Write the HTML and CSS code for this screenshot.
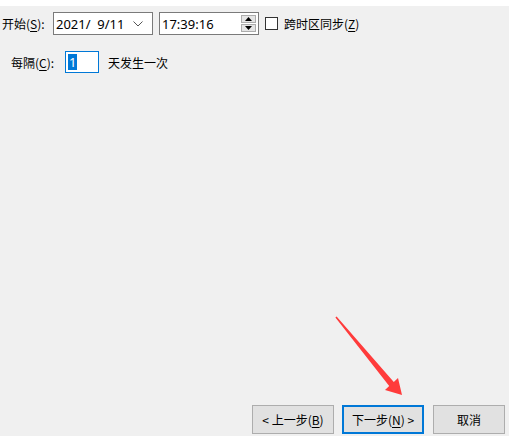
FILE: index.html
```html
<!DOCTYPE html>
<html lang="zh-CN">
<head>
    <meta charset="UTF-8">
    <title>触发器</title>
    <link rel="stylesheet" href="styles.css">
</head>
<body>
    <div class="page">
        <div class="topband"></div>

        <!-- 开始时间 -->
        <div class="row start-row">
            <label class="label">开始(<u>S</u>):</label>
            <div class="field date-field">
                <span class="value">2021/&nbsp; 9/11</span>
                <svg class="caret" width="10" height="6" viewBox="0 0 10 6">
                    <path d="M0.5 0.5 L5 5 L9.5 0.5" fill="none" stroke="#555" stroke-width="1"/>
                </svg>
            </div>
            <div class="field time-field">
                <span class="value">17:39:16</span>
                <div class="spin">
                    <div class="spin-btn"><svg width="7" height="4" viewBox="0 0 7 4"><path d="M0 4 L3.5 0 L7 4 Z" fill="#000"/></svg></div>
                    <div class="spin-btn"><svg width="7" height="4" viewBox="0 0 7 4"><path d="M0 0 L3.5 4 L7 0 Z" fill="#000"/></svg></div>
                </div>
            </div>
            <div class="check">
                <span class="box"></span>
                <span>跨时区同步(<u>Z</u>)</span>
            </div>
        </div>

        <!-- 间隔 -->
        <div class="row interval-row">
            <label class="label">每隔(<u>C</u>):</label>
            <div class="num-field"><span class="selected">1</span></div>
            <span class="suffix">天发生一次</span>
        </div>

        <div class="footer">
            <button class="btn">&lt; 上一步(<u>B</u>)</button>
            <button class="btn primary">下一步(<u>N</u>) &gt;</button>
            <button class="btn cancel">取消</button>
        </div>

        <!-- 红色箭头标注 -->
        <svg class="arrow" width="80" height="90" viewBox="0 0 80 90">
            <path d="M1.4 1.4 L55.2 69.9 L51 74 L68 79 L64 62 L59.8 66.1 L2.6 0.6 Z" fill="#ff3b3b"/>
        </svg>
    </div>
</body>
</html>
```

FILE: styles.css
```css
body {
    margin: 0;
    background: #f0f0f0;
    font-family: "Noto Sans CJK SC", "Noto Sans", sans-serif;
    font-size: 12px;
    color: #000;
}
.page {
    position: relative;
    height: 436px;
    display: flex;
    flex-direction: column;
}
.topband {
    height: 6px;
    background: #fff;
}
.row {
    display: flex;
    align-items: center;
}
.start-row {
    margin-top: 6px;
    padding-left: 2px;
    height: 23px;
}
.label u, .check u, .btn u {
    text-decoration: underline;
    text-underline-offset: 2px;
}
.start-row .label {
    width: 51px;
}
.field {
    box-sizing: border-box;
    height: 23px;
    border: 1px solid #7a7a7a;
    background: #fff;
    display: flex;
    align-items: center;
    font-family: "Noto Sans", sans-serif;
    font-size: 13px;
}
.field .value {
    padding-left: 2px;
    flex: 1;
}
.date-field {
    width: 100px;
}
.date-field .caret {
    margin-right: 9px;
}
.time-field {
    width: 100px;
    margin-left: 6px;
    padding-right: 2px;
}
.spin {
    display: flex;
    flex-direction: column;
    gap: 1px;
}
.spin-btn {
    box-sizing: border-box;
    width: 15px;
    height: 8px;
    background: #e5e5e5;
    border: 1px solid #acacac;
    display: flex;
    align-items: center;
    justify-content: center;
}
.check {
    display: flex;
    align-items: center;
    margin-left: 6px;
}
.check .box {
    box-sizing: border-box;
    width: 13px;
    height: 13px;
    border: 1px solid #333;
    background: #fff;
    margin-right: 6px;
}
.interval-row {
    margin-top: 16px;
    padding-left: 11px;
    height: 22px;
}
.interval-row .label {
    width: 54px;
}
.num-field {
    box-sizing: border-box;
    width: 34px;
    height: 22px;
    border: 1px solid #0078d7;
    background: #fff;
    padding: 2px 0 0 2px;
    font-family: "Noto Sans", sans-serif;
    font-size: 13px;
    line-height: 16px;
}
.selected {
    background: #0078d7;
    color: #fff;
    display: inline-block;
    padding: 0 1px;
}
.suffix {
    margin-left: 9px;
}
.footer {
    margin-top: auto;
    margin-bottom: 2px;
    display: flex;
    justify-content: flex-end;
    padding-right: 4px;
    gap: 8px;
}
.btn {
    box-sizing: border-box;
    width: 82px;
    height: 29px;
    background: #e1e1e1;
    border: 1px solid #adadad;
    font-family: "Noto Sans CJK SC", sans-serif;
    font-size: 12px;
    color: #000;
    padding: 0;
}
.btn.primary {
    border: 2px solid #0078d7;
}
.btn.cancel {
    width: 72px;
    margin-left: 1px;
}
.arrow {
    position: absolute;
    left: 334px;
    top: 316px;
}
```
